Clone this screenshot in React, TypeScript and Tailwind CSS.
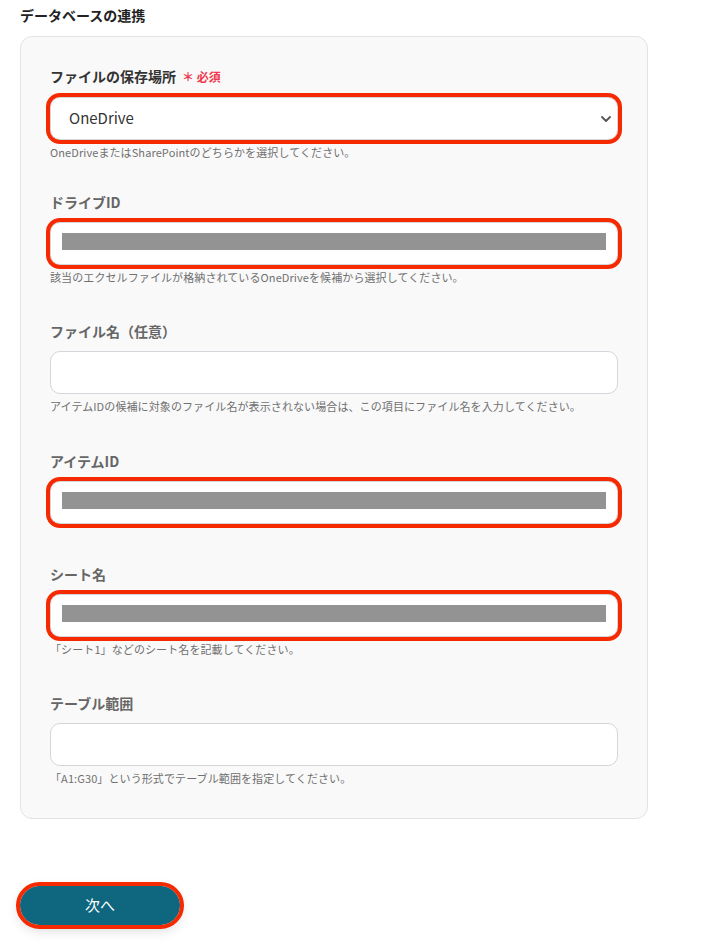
import type { ReactNode } from "react";

type Kind = "select" | "masked" | "empty";

const fields: {
  label: string;
  required?: boolean;
  helper?: string;
  kind: Kind;
  marked?: boolean;
  gap: string;
}[] = [
  {
    label: "ファイルの保存場所",
    required: true,
    helper: "OneDriveまたはSharePointのどちらかを選択してください。",
    kind: "select",
    marked: true,
    gap: "mt-0",
  },
  {
    label: "ドライブID",
    helper: "該当のエクセルファイルが格納されているOneDriveを候補から選択してください。",
    kind: "masked",
    marked: true,
    gap: "mt-[33px]",
  },
  {
    label: "ファイル名（任意）",
    helper: "アイテムIDの候補に対象のファイル名が表示されない場合は、この項目にファイル名を入力してください。",
    kind: "empty",
    gap: "mt-[37px]",
  },
  {
    label: "アイテムID",
    kind: "masked",
    marked: true,
    gap: "mt-[38px]",
  },
  {
    label: "シート名",
    helper: "「シート1」などのシート名を記載してください。",
    kind: "masked",
    marked: true,
    gap: "mt-[40px]",
  },
  {
    label: "テーブル範囲",
    helper: "「A1:G30」という形式でテーブル範囲を指定してください。",
    kind: "empty",
    gap: "mt-[37px]",
  },
];

function Box({ marked, children }: { marked?: boolean; children?: ReactNode }) {
  return (
    <div
      className={
        "flex h-[43px] w-full items-center rounded-[10px] border border-[#d3d6db] bg-white " +
        (marked ? "outline-4 outline-[#f62a00]" : "")
      }
    >
      {children}
    </div>
  );
}

function Field({ f }: { f: (typeof fields)[number] }) {
  return (
    <div className={f.gap}>
      <div
        className={
          "flex items-baseline gap-1 text-[14px] font-bold leading-[20px] " +
          (f.required ? "text-[#333]" : "text-[#666]")
        }
      >
        {f.label}
        {f.required && (
          <span className="ml-0.5 text-[12px] font-bold text-[#ee3a4f]">＊ 必須</span>
        )}
      </div>
      <div className="mt-[10px]">
        <Box marked={f.marked}>
          {f.kind === "select" && (
            <div className="flex w-full items-center justify-between pl-[18px] pr-[6px]">
              <span className="text-[15px] text-[#333]">OneDrive</span>
              <svg width="10" height="6" viewBox="0 0 10 6" fill="none">
                <path d="M1 1l4 4 4-4" stroke="#555" strokeWidth="1.8" strokeLinecap="round" strokeLinejoin="round" />
              </svg>
            </div>
          )}
          {f.kind === "masked" && (
            <div className="mx-[11px] -mt-[4px] h-[17px] w-full bg-[#939393]" />
          )}
        </Box>
      </div>
      {f.helper && (
        <p className="mt-[5px] text-[11px] leading-[14px] tracking-[0.1px] text-[#707070]">{f.helper}</p>
      )}
    </div>
  );
}

export default function App() {
  return (
    <div
      className="min-h-[942px] w-[722px] bg-white px-[20px] pt-[5px]"
      style={{ fontFamily: '"Noto Sans CJK JP", "Noto Sans", sans-serif' }}
    >
      <h2 className="text-[14px] font-bold leading-[20px] text-[#222]">データベースの連携</h2>
      <div className="mt-[11px] w-[628px] rounded-[12px] border border-[#e2e3e6] bg-[#f9f9f9] px-[29px] pb-[33px] pt-[29px]">
        {fields.map((f) => (
          <Field key={f.label} f={f} />
        ))}
      </div>
      <button className="mt-[67px] h-[39px] w-[160px] rounded-full bg-[#0f667f] text-[15px] text-white shadow-[0_4px_14px_rgba(0,0,0,0.18)] outline-4 outline-[#f62a00]">
        次へ
      </button>
    </div>
  );
}
